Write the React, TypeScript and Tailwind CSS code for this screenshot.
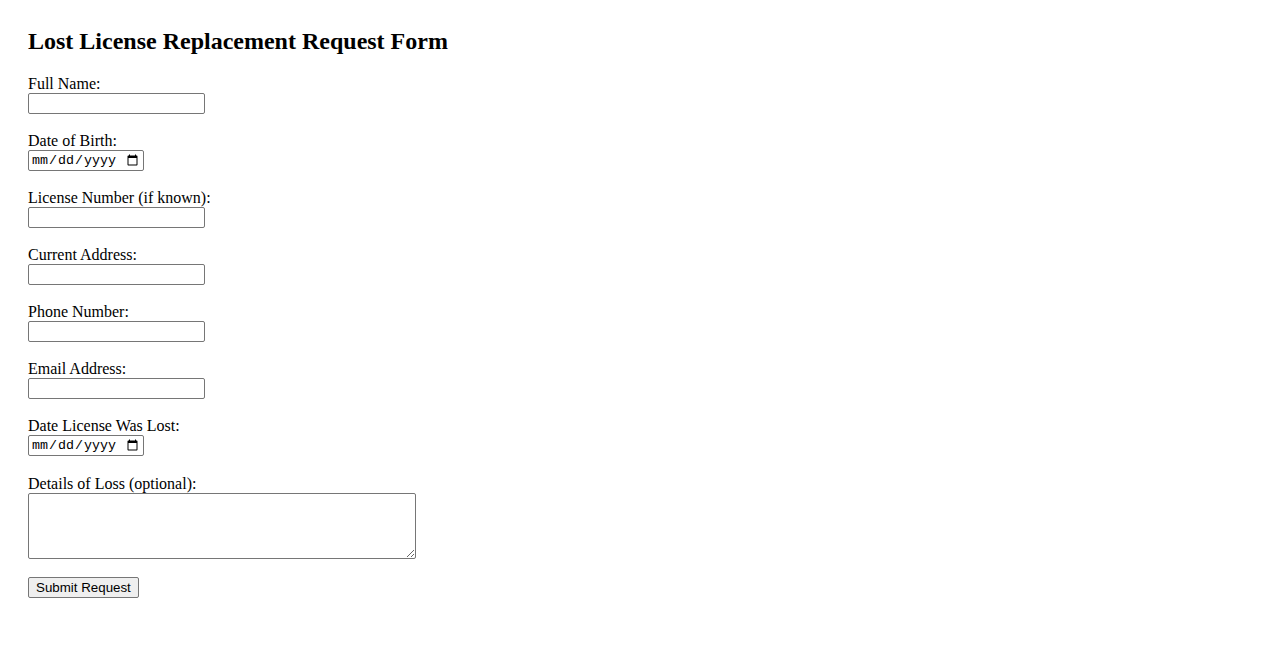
import { useState } from 'react';

type Field = { id: string; label: string; type: 'text' | 'date' | 'tel' | 'email' };

const FIELDS: Field[] = [
  { id: 'fullName', label: 'Full Name:', type: 'text' },
  { id: 'dob', label: 'Date of Birth:', type: 'date' },
  { id: 'licenseNumber', label: 'License Number (if known):', type: 'text' },
  { id: 'address', label: 'Current Address:', type: 'text' },
  { id: 'phone', label: 'Phone Number:', type: 'tel' },
  { id: 'email', label: 'Email Address:', type: 'email' },
  { id: 'dateLost', label: 'Date License Was Lost:', type: 'date' },
];

export default function App() {
  const [values, setValues] = useState<Record<string, string>>({});

  function update(id: string, val: string) {
    setValues({ ...values, [id]: val });
  }

  return (
    <div className="min-h-screen bg-white px-[28px] pt-[27px] text-black font-['Liberation_Serif','Times_New_Roman',serif] text-[16px]">
      <h2 className="text-[24px] font-bold leading-[28px] mb-[20px]">Lost License Replacement Request Form</h2>

      <form onSubmit={(e) => e.preventDefault()}>
        {FIELDS.map((f) => (
          <div key={f.id} className="mb-[18px]">
            <label htmlFor={f.id} className="block leading-[18px]">
              {f.label}
            </label>
            {f.type === 'date' ? (
              <input
                id={f.id}
                type="date"
                value={values[f.id] ?? ''}
                onChange={(e) => update(f.id, e.target.value)}
                className="block w-[116px] h-[21px] border border-[#767676] rounded-[2px] px-[2px] bg-white text-[13.33px] font-['Liberation_Mono','DejaVu_Sans_Mono',monospace] leading-[15px]"
              />
            ) : (
              <input
                id={f.id}
                type={f.type}
                value={values[f.id] ?? ''}
                onChange={(e) => update(f.id, e.target.value)}
                className="block w-[177px] h-[21px] border border-[#767676] rounded-[2px] px-[2px] bg-white text-[13.33px] font-['Liberation_Sans',Arial,sans-serif]"
              />
            )}
          </div>
        ))}

        <div className="pt-[1px] mb-[18px]">
          <label htmlFor="details" className="block leading-[18px]">
            Details of Loss (optional):
          </label>
          <textarea
            id="details"
            rows={4}
            cols={50}
            value={values.details ?? ''}
            onChange={(e) => update('details', e.target.value)}
            className="block w-[388px] h-[66px] border border-[#767676] rounded-[2px] px-[2px] py-[2px] bg-white text-[13.33px] font-['Liberation_Mono',monospace]"
          />
        </div>

        <button
          type="submit"
          className="block h-[21px] px-[7px] border border-[#767676] rounded-[2px] bg-[#efefef] text-[13.33px] leading-[15px] font-['Liberation_Sans',Arial,sans-serif]"
        >
          Submit Request
        </button>
      </form>
    </div>
  );
}
